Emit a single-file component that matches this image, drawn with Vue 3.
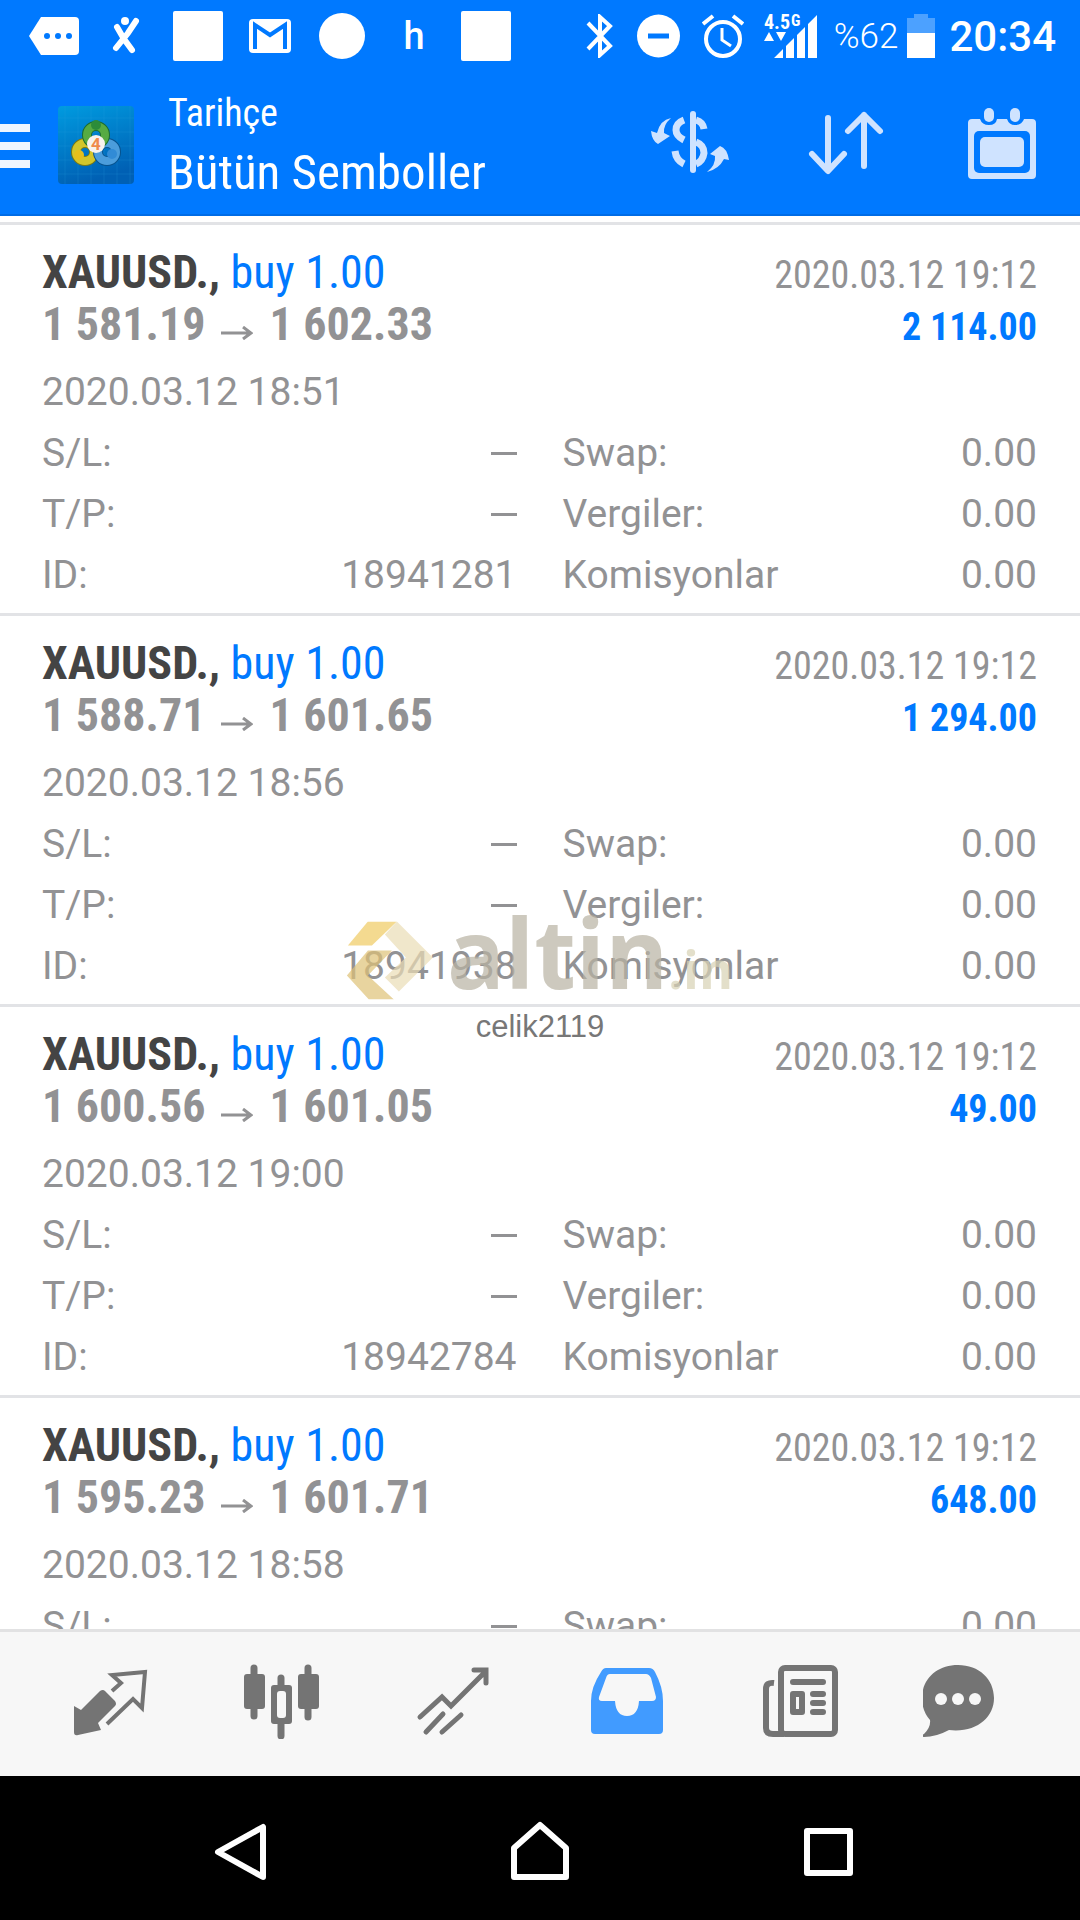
<script setup>
const trades = [
  { symbol: 'XAUUSD.,', side: 'buy 1.00', open: '1 581.19', close: '1 602.33', closed: '2020.03.12 19:12', profit: '2 114.00', opened: '2020.03.12 18:51', id: '18941281' },
  { symbol: 'XAUUSD.,', side: 'buy 1.00', open: '1 588.71', close: '1 601.65', closed: '2020.03.12 19:12', profit: '1 294.00', opened: '2020.03.12 18:56', id: '18941938' },
  { symbol: 'XAUUSD.,', side: 'buy 1.00', open: '1 600.56', close: '1 601.05', closed: '2020.03.12 19:12', profit: '49.00', opened: '2020.03.12 19:00', id: '18942784' },
  { symbol: 'XAUUSD.,', side: 'buy 1.00', open: '1 595.23', close: '1 601.71', closed: '2020.03.12 19:12', profit: '648.00', opened: '2020.03.12 18:58', id: '' },
]

const details = (t) => [
  ['S/L:', '—'],
  ['Swap:', '0.00'],
  ['T/P:', '—'],
  ['Vergiler:', '0.00'],
  ['ID:', t.id],
  ['Komisyonlar', '0.00'],
]
// The last trade is only partly scrolled into view.
const visibleDetails = (t) => (t.id ? details(t) : details(t).slice(0, 2))
</script>

<template>
  <div class="screen">
    <div class="status">
      <div class="notices">
        <svg width="50" height="38" viewBox="0 0 50 38"><path d="M12 0H46q4 0 4 4V34q0 4-4 4H12L0 19z" fill="#fff" /><g fill="#0079ff"><circle cx="18" cy="19" r="3" /><circle cx="29" cy="19" r="3" /><circle cx="40" cy="19" r="3" /></g></svg>
        <svg width="28" height="38" viewBox="0 0 28 38"><circle cx="13" cy="4" r="4" fill="#fff" /><path d="M5 10L12 22L20 33M24 4L16 16L4 31" fill="none" stroke="#fff" stroke-width="6" stroke-linecap="round" /></svg>
        <i class="block"></i>
        <svg width="42" height="34" viewBox="0 0 42 34"><rect width="42" height="34" rx="4" fill="#fff" /><path d="M6 30V6L21 16L36 6V30" fill="none" stroke="#0079ff" stroke-width="4" /></svg>
        <i class="disc"></i>
        <span class="letter">h</span>
        <i class="block"></i>
      </div>
      <div class="system">
        <svg width="27" height="44" viewBox="0 0 27 44"><path d="M2 9L24 32L14 41V3L24 12L2 35" fill="none" stroke="#fff" stroke-width="4" /></svg>
        <svg class="dnd" width="43" height="44" viewBox="0 0 43 44"><circle cx="21.500" cy="22" r="21.500" fill="#fff" /><path d="M11 22H32" stroke="#0079ff" stroke-width="5" /></svg>
        <svg class="alarm" width="42" height="44" viewBox="0 0 42 44" fill="none" stroke="#fff"><circle cx="21" cy="25" r="17" stroke-width="4" /><path d="M20 14V26L29 32" stroke-width="3" /><path d="M1 10L11 2M31 2L41 10" stroke-width="4" /></svg>
        <svg class="signal" width="54" height="46" viewBox="0 0 54 46" fill="#fff"><text x="0" y="16" font-size="20">4.5</text><text x="27" y="13" font-size="16">G</text><path d="M0 28L5 19L10 28zM12 19H22L17 28zM10 45L19 36V45zM22 45V33L30 25V45zM33 45V22L41 14V45zM44 45V11L53 2V45z" /></svg>
        <span class="percent">%62</span>
        <svg class="battery" width="28" height="44" viewBox="0 0 28 44"><path d="M0 4H7V0H21V4H28V20H0z" fill="#4ca1ff" /><path d="M0 19H28V44H0z" fill="#fff" /></svg>
        <span class="clock">20:34</span>
      </div>
    </div>

    <header class="appbar">
      <button class="menu" aria-label="Menu"><i></i><i></i><i></i></button>
      <svg class="logo" width="76" height="78" viewBox="0 0 76 78">
        <defs>
          <linearGradient id="tile" x1="0" y1="0" x2="0.300" y2="1"><stop offset="0" stop-color="#009be0" /><stop offset="1" stop-color="#0060b4" /></linearGradient>
        </defs>
        <rect width="76" height="78" rx="4" fill="url(#tile)" />
        <path d="M7 0V78M20 0V78M33 0V78M46 0V78M59 0V78M72 0V78M0 12H76M0 26H76M0 40H76M0 54H76M0 68H76" stroke="#27a2e0" stroke-opacity=".2" />
        <g fill="none" stroke-width="8">
          <circle cx="27" cy="46" r="9" stroke="#7b7a12" stroke-width="10" /><circle cx="27" cy="46" r="9" stroke="#d3c62b" />
          <circle cx="49" cy="46" r="9" stroke="#07528d" stroke-width="10" /><circle cx="49" cy="46" r="9" stroke="#4b9ddc" />
          <circle cx="38" cy="29" r="9" stroke="#1c6b30" stroke-width="10" /><circle cx="38" cy="29" r="9" stroke="#57ab42" />
        </g>
        <circle cx="38" cy="19" r="5" fill="#2c8c3a" /><circle cx="21" cy="49" r="5" fill="#e5bf1c" /><circle cx="54" cy="48" r="5" fill="#318bd6" />
        <circle cx="38" cy="38" r="9" fill="#f7f2ee" />
        <text x="38" y="44" text-anchor="middle" font-size="17" font-weight="700" fill="#ef8a4c">4</text>
      </svg>
      <div class="titles">
        <span class="sub">Tarihçe</span>
        <h1>Bütün Semboller</h1>
      </div>
      <div class="actions">
        <button aria-label="Currency">
          <svg width="80" height="72" viewBox="0 0 80 72" fill="none" stroke="#cfe3ff">
            <path d="M43 7V63" stroke-width="6" stroke-linecap="round" />
            <path d="M34 13Q26 16 26 23Q26 29 34 33M46 13Q53 15 54 22M46 35Q54 38 54 46Q53 54 46 57M25 44Q26 53 34 57" stroke-width="7" />
            <path d="M21 11Q13 18 14 26L20 29L8 37Q2 34 1 24L7 26Q10 13 21 11zM57 65Q66 58 65 49L60 47L70 39Q77 41 79 53L74 52Q69 62 57 65z" fill="#cfe3ff" stroke="none" />
          </svg>
        </button>
        <button aria-label="Sort">
          <svg width="80" height="72" viewBox="0 0 80 72" fill="none" stroke="#cfe3ff" stroke-width="6" stroke-linecap="round" stroke-linejoin="round"><path d="M22 11V63M6 47L22 64L38 47M58 59V8M42 24L58 8L74 24" /></svg>
        </button>
        <button aria-label="Calendar">
          <svg width="80" height="72" viewBox="0 0 80 72"><path d="M10 12H18Q20 18 27 18Q34 18 35 12H45Q47 18 53 18Q60 18 62 12H70Q74 12 74 16V68Q74 72 70 72H10Q6 72 6 68V16Q6 12 10 12z" fill="#cfe3ff" /><rect x="12" y="24" width="56" height="42" rx="5" fill="#0079ff" /><rect x="18" y="30" width="44" height="30" rx="5" fill="#cfe3ff" /><rect x="22" y="1" width="10" height="14" rx="5" fill="#cfe3ff" /><rect x="48" y="1" width="10" height="14" rx="5" fill="#cfe3ff" /></svg>
        </button>
      </div>
    </header>

    <main class="list">
      <article v-for="t in trades" :key="t.opened" class="trade">
        <div class="line">
          <div class="name"><strong>{{ t.symbol }}</strong> <span>{{ t.side }}</span></div>
          <time class="closed">{{ t.closed }}</time>
        </div>
        <div class="line">
          <div class="prices">
            <span>{{ t.open }}</span>
            <svg width="32" height="14" viewBox="0 0 32 14" fill="none" stroke="#929294" stroke-width="3"><path d="M0 7H29M22 1L30 7L22 13" /></svg>
            <span>{{ t.close }}</span>
          </div>
          <strong class="profit">{{ t.profit }}</strong>
        </div>
        <time class="opened">{{ t.opened }}</time>
        <dl class="details">
          <div v-for="[label, value] in visibleDetails(t)" :key="label">
            <dt>{{ label }}</dt>
            <dd><i v-if="value === '—'" class="dash"></i><template v-else>{{ value }}</template></dd>
          </div>
        </dl>
      </article>
    </main>

    <nav class="tabs">
      <button aria-label="Quotes">
        <svg width="100" height="76" viewBox="0 0 100 76"><path d="M17 43L24 47L43 28Q46 26 48 28L58 38Q60 41 58 43L41 60L44 67L21 72Q17 73 17 69z" fill="#747474" /><path d="M55 28L64 20L55 12L88 9L85 45L76 36L50 61" fill="none" stroke="#747474" stroke-width="4" /></svg>
      </button>
      <button aria-label="Charts">
        <svg width="100" height="76" viewBox="0 0 100 76"><path d="M24 5V53M51 15V73M78 5V54" stroke="#747474" stroke-width="7" stroke-linecap="round" /><g fill="#747474"><rect x="14" y="11" width="21" height="35" rx="3" /><rect x="41" y="22" width="21" height="39" rx="3" /><rect x="68" y="11" width="21" height="35" rx="3" /></g><rect x="47" y="28" width="9" height="27" rx="3" fill="#f7f7f7" /></svg>
      </button>
      <button aria-label="Trade">
        <svg width="100" height="76" viewBox="0 0 100 76" fill="none" stroke="#747474" stroke-width="5" stroke-linecap="round"><path d="M17 54L39 34L48 43L82 9M71 7H83V20M23 69L40 51M39 69L58 52" /></svg>
      </button>
      <button aria-label="History">
        <svg width="100" height="76" viewBox="0 0 100 76"><path d="M29 5H72Q76 5 78 9Q86 24 86 38V67Q86 71 82 71H18Q14 71 14 67V38Q14 24 24 9Q26 5 29 5z" fill="#419bff" /><path d="M33 11H69Q72 11 74 15L79 34Q79 38 75 38H62Q61 53 50 53Q39 53 38 38H25Q21 38 22 34L29 15Q30 11 33 11z" fill="#f7f7f7" /></svg>
      </button>
      <button aria-label="News">
        <svg width="100" height="76" viewBox="0 0 100 76" fill="none" stroke="#747474"><rect x="31" y="5" width="54" height="66" rx="4" stroke-width="6" /><path d="M24 20Q16 19 16 26V65Q16 71 23 71H34" stroke-width="6" /><path d="M43 19H73M63 31H73M63 40H73M63 49H73" stroke-width="6" stroke-linecap="round" /><rect x="43" y="31" width="9" height="18" stroke-width="6" stroke-linejoin="round" /></svg>
      </button>
      <button aria-label="Messages">
        <svg width="100" height="76" viewBox="0 0 100 76"><path d="M35 2C56 2 71 16 71 35C71 55 53 70 26 67Q13 74 1 74Q-3 73 1 71Q8 64 7 57Q-1 48 -1 35C-1 16 14 2 35 2z" fill="#747474" /><g fill="#f7f7f7"><circle cx="18" cy="36" r="6" /><circle cx="35" cy="36" r="6" /><circle cx="52" cy="36" r="6" /></g></svg>
      </button>
    </nav>

    <nav class="system-nav">
      <button aria-label="Back"><svg width="80" height="64" viewBox="0 0 80 64"><path d="M7 33L52 8V58z" /></svg></button>
      <button aria-label="Home"><svg width="80" height="64" viewBox="0 0 80 64"><path d="M40 6L66 29V58H14V29z" /></svg></button>
      <button aria-label="Recent apps"><svg width="80" height="64" viewBox="0 0 80 64"><path d="M18 12H61V54H18z" /></svg></button>
    </nav>

    <div class="watermark">
      <div class="brand">
        <svg width="86" height="78" viewBox="0 0 86 78"><path d="M21 0H50L25 24H1z" fill="#f0cb62" /><path d="M50 0L86 36L52 70L38 56L59 36L38 13z" fill="#ebddb6" /><path d="M21 29H45L21 54L47 78H22L0 54z" fill="#dfc277" /></svg>
        <span class="altin">altin</span><span class="in">.in</span>
      </div>
      <span class="user">celik2119</span>
    </div>
  </div>
</template>

<style>
body {
  margin: 0;
}
</style>

<style scoped>
.screen {
  position: relative;
  display: flex;
  flex-direction: column;
  height: 100vh;
  overflow: hidden;
  background: #fff;
  font-family: Roboto, "Noto Sans", sans-serif;
  color: #929294;
}
button {
  display: flex;
  justify-content: center;
  align-items: center;
  padding: 0;
  border: 0;
  background: none;
}
svg {
  flex: none;
}
.status {
  display: flex;
  justify-content: space-between;
  height: 72px;
  padding: 0 24px 0 18px;
  background: #0079ff;
  color: #fff;
  flex: none;
}
.notices {
  display: grid;
  grid-template-columns: repeat(7, 72px);
  place-items: center;
}
.block {
  width: 50px;
  height: 50px;
  border-radius: 2px;
  background: #fff;
}
.disc {
  width: 46px;
  height: 46px;
  border-radius: 50%;
  background: #fff;
}
.letter {
  font-size: 38px;
  font-weight: 500;
  line-height: 72px;
}
.system {
  display: flex;
  align-items: center;
}
.dnd {
  margin-left: 24px;
}
.alarm {
  margin-left: 22px;
}
.signal {
  margin-left: 20px;
  overflow: visible;
  font-family: "Roboto Condensed", Roboto, sans-serif;
  font-weight: 700;
}
.percent {
  margin-left: 16px;
  font-size: 35px;
  font-weight: 300;
}
.battery {
  margin: 0 14px 0 9px;
}
.clock {
  font-size: 42px;
  font-weight: 500;
}
.appbar {
  display: flex;
  align-items: center;
  flex: none;
  height: 142px;
  padding-right: 38px;
  border-bottom: 2px solid #006ce6;
  background: #0079ff;
  color: #fff;
}
.menu {
  flex-direction: column;
  gap: 10px;
  padding-top: 6px;
}
.menu i {
  width: 30px;
  height: 8px;
  background: #eff6ff;
}
.logo {
  margin: 4px 34px 0 28px;
}
.titles {
  display: flex;
  flex-direction: column;
  padding-top: 4px;
  font-family: "Roboto Condensed", Roboto, sans-serif;
}
.sub {
  font-size: 38px;
  line-height: 56px;
}
h1 {
  margin: 0;
  font-size: 49px;
  font-weight: 400;
  line-height: 64px;
}
.actions {
  display: flex;
  gap: 76px;
  margin-left: auto;
}
.list {
  flex: 1;
  min-height: 0;
  overflow: hidden;
  padding-top: 6px;
}
.trade {
  padding: 21px 43px 7px 42px;
  border-top: 3px solid #e2e3e6;
}
.line {
  display: flex;
  justify-content: space-between;
  align-items: baseline;
  height: 52px;
  font-family: "Roboto Condensed", Roboto, sans-serif;
  font-size: 46px;
  line-height: 52px;
}
.name strong {
  color: #444;
}
.name span,
.profit {
  color: #0079ff;
}
.closed,
.profit {
  font-size: 38px;
}
.prices {
  font-weight: 700;
}
.prices svg {
  margin: 0 16px;
}
.opened {
  display: block;
  margin-top: 12px;
  font-size: 39px;
  line-height: 61px;
}
.details {
  display: grid;
  grid-template-columns: 1fr 1fr;
  column-gap: 46px;
  margin: 0;
  font-size: 39px;
  line-height: 61px;
}
.details div {
  display: flex;
  justify-content: space-between;
}
dd {
  display: flex;
  align-items: center;
  margin: 0;
}
.dash {
  width: 26px;
  height: 3px;
  background: #929294;
}
.tabs {
  display: grid;
  grid-template-columns: repeat(6, 1fr);
  flex: none;
  height: 138px;
  padding: 0 20px 6px;
  border-top: 3px solid #e2e2e3;
  background: #f7f7f7;
}
.system-nav {
  display: grid;
  grid-template-columns: repeat(3, 1fr);
  flex: none;
  height: 138px;
  padding: 6px 106px 0;
  background: #000;
}
.system-nav path {
  fill: none;
  stroke: #fff;
  stroke-width: 6px;
  stroke-linejoin: round;
}
.watermark {
  position: absolute;
  top: 50%;
  left: 50%;
  display: flex;
  flex-direction: column;
  align-items: center;
  padding-top: 36px;
  transform: translate(-50%, -50%);
  pointer-events: none;
}
.brand {
  display: flex;
  align-items: baseline;
  font-family: "Open Sans", sans-serif;
  font-weight: 700;
  line-height: 80px;
  opacity: 0.7;
}
.brand svg {
  align-self: center;
  margin-right: 14px;
}
.altin {
  font-size: 96px;
  color: #b9b3a3;
}
.in {
  font-size: 52px;
  color: #d8d2b5;
}
.user {
  font-family: "Liberation Sans", sans-serif;
  font-size: 31px;
  line-height: 36px;
  color: #777;
}
</style>
